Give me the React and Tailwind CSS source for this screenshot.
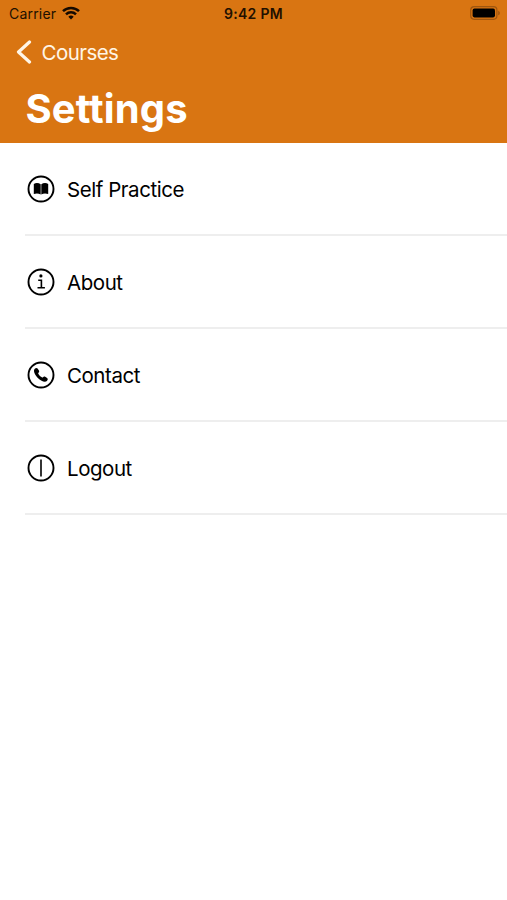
const items = [
  {
    label: "Self Practice",
    glyph: (
      <path
        fill="currentColor"
        d="M13.7 9.300c-2-1.500-4.900-1.500-6.900-.4v10.200c2.200-.8 4.900-.7 6.900.3zM14.300 9.300c2-1.500 4.900-1.500 6.900-.4v10.200c-2.200-.8-4.900-.7-6.900.3z"
      />
    ),
  },
  {
    label: "About",
    glyph: (
      <>
        <circle cx="13.900" cy="7.900" r="1.600" fill="currentColor" />
        <path d="M11.200 12.200h3.200v7.300M10.500 19.700h7.400" fill="none" stroke="currentColor" strokeWidth="1.600" />
      </>
    ),
  },
  {
    label: "Contact",
    glyph: (
      <path
        fill="currentColor"
        d="M7.800 7.800c.9-1.100 2-1.200 2.800-.2l1.300 1.900c.5.8.3 1.600-.4 2.200-.4.4-.4.6-.1 1.200.9 1.400 2 2.500 3.400 3.400.5.3.8.3 1.200-.1.600-.7 1.400-.9 2.200-.4l1.900 1.300c1 .8.9 1.800-.2 2.800-1.300 1.200-3.300.9-5.800-.5-2.500-1.500-4.800-3.800-6.100-6.200-1.200-2.200-1.400-4.100-.2-5.400z"
      />
    ),
  },
  {
    label: "Logout",
    glyph: <path d="M14 5.400v17.200" stroke="currentColor" strokeWidth="1.600" />,
  },
];

function CircleIcon({ children }) {
  return (
    <svg className="h-7 w-7 shrink-0" viewBox="0 0 28 28">
      <circle cx="14" cy="14" r="12.500" fill="none" stroke="currentColor" strokeWidth="1.900" />
      {children}
    </svg>
  );
}

function StatusBar() {
  return (
    <div className="grid h-7 grid-cols-3 items-center text-[14px] leading-7 text-[#211000]">
      <div className="flex items-center pl-[9px]">
        <span className="w-[53px] whitespace-nowrap tracking-[0.2px]">Carrier</span>
        <svg className="-mt-[2px] h-[14px] w-[18px]" viewBox="0 0 18 14">
          <g fill="none" stroke="#150a00" strokeWidth="2.500">
            <path d="M1 5.200a11.400 11.400 0 0 1 16 0" />
            <path d="M4 8.300a7.100 7.100 0 0 1 10 0" />
          </g>
          <path d="M9 13.500 6.300 10.800a3.900 3.900 0 0 1 5.400 0z" fill="#150a00" />
        </svg>
      </div>
      <span className="text-center font-semibold tracking-[0.3px]">9:42 PM</span>
      <svg className="-mt-[2px] mr-[6px] h-[14px] w-[31px] justify-self-end" viewBox="0 0 31 14">
        <rect x="0.700" y="0.700" width="26.200" height="12.600" rx="3.500" fill="none" stroke="#9f560f" strokeWidth="1.200" />
        <rect x="2.600" y="2.600" width="22.400" height="8.800" rx="1.800" fill="#000" />
        <path d="M28.200 4.700c2.200.8 2.200 3.800 0 4.600z" fill="#9f560f" />
      </svg>
    </div>
  );
}

export default function App() {
  return (
    <div className="h-[900px] w-full overflow-hidden bg-white font-['Inter',sans-serif] text-black">
      <header className="h-[142.5px] bg-[#d97512]">
        <StatusBar />
        <div className="flex h-12 items-center pl-4 text-[20.5px] tracking-[-0.55px] text-[#fff5e6]">
          <svg className="mr-[9.5px] h-6 w-4" viewBox="0 0 16 24">
            <path d="M13.500 2 2.500 12l11 10" fill="none" stroke="currentColor" strokeWidth="3.200" strokeLinecap="round" strokeLinejoin="round" />
          </svg>
          <span className="pt-[3px]">Courses</span>
        </div>
        <h1 className="pl-[25.5px] pt-[8px] text-[40px] font-bold leading-[50px] tracking-[0.1px] text-white">Settings</h1>
      </header>
      <ul className="pl-[25px]">
        {items.map((item) => (
          <li key={item.label} className="flex h-[93px] items-center border-b-2 border-[#eeeeee] pl-[2px] pt-[2px]">
            <CircleIcon>{item.glyph}</CircleIcon>
            <span className="ml-3 pt-[3px] text-[20.5px] tracking-[-0.45px]">{item.label}</span>
          </li>
        ))}
      </ul>
    </div>
  );
}
